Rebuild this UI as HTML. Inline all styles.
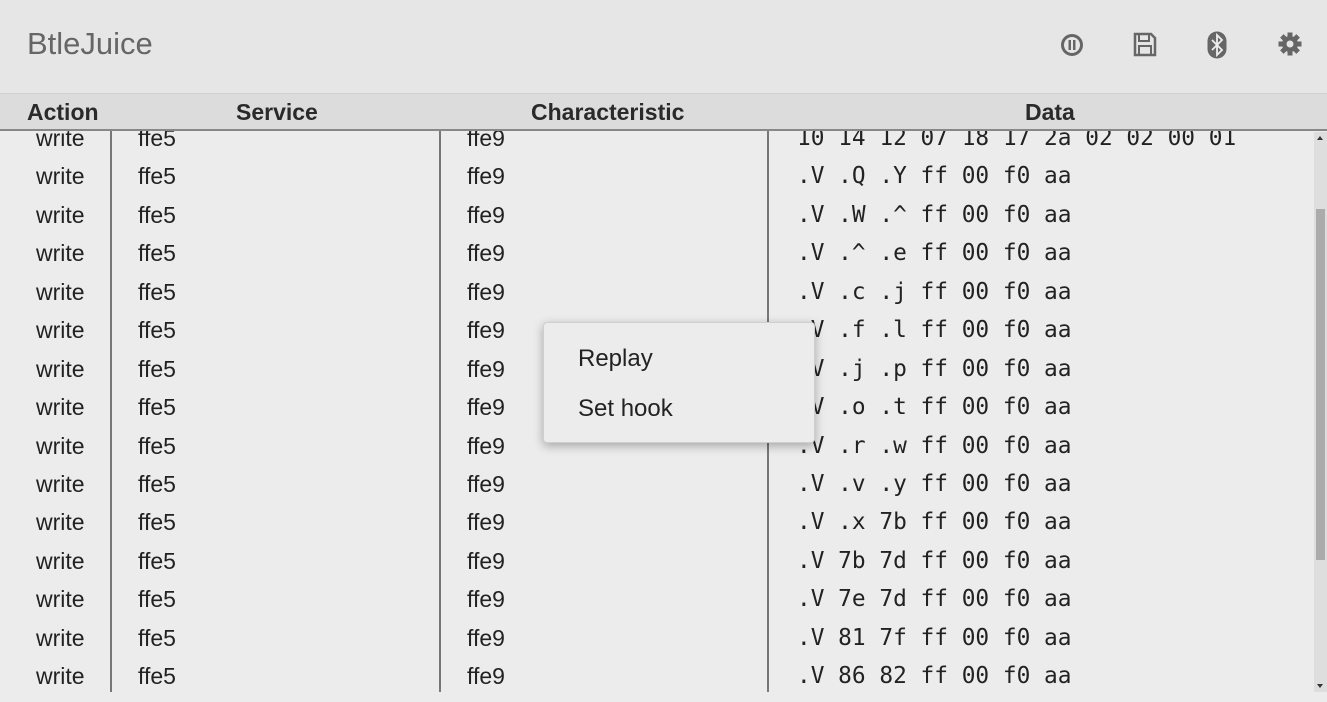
<!DOCTYPE html>
<html><head><meta charset="utf-8"><style>
*{margin:0;padding:0;box-sizing:border-box}
body{width:1327px;height:702px;overflow:hidden;background:#ececec;font-family:"Liberation Sans",sans-serif;position:relative;color:#222}
#top{position:absolute;left:0;top:0;width:1327px;height:93px;background:#e6e6e6}
#title{position:absolute;left:27px;top:26px;font-size:31px;color:#666}
#hdr{position:absolute;left:0;top:93px;width:1327px;height:38px;background:#dcdcdc;border-top:1px solid #d0d0d0;border-bottom:2px solid #888;z-index:2}
.h{position:absolute;top:5px;font-size:23px;font-weight:bold;color:#2a2a2a}
.vl{position:absolute;top:131px;height:561px;width:2px;background:#777}
.row{position:absolute;left:0;height:38px;line-height:38px;font-size:23px;white-space:nowrap;width:1300px}
.row span{position:absolute;top:0}
.a{left:36px}.s{left:138px}.c{left:467px}
.d{left:797px;font-family:"DejaVu Sans Mono","Liberation Mono",monospace;font-size:22.8px}
#bot{position:absolute;left:0;top:692px;width:1327px;height:10px;background:#ececec;z-index:1}
#sb{position:absolute;left:1314px;top:132px;width:13px;height:560px;background:#dedede}
#th{position:absolute;left:1316px;top:209px;width:9px;height:351px;background:#ababab}
#menu{position:absolute;left:543px;top:322px;width:272px;height:121px;background:#ececec;border:1px solid #cfcfcf;border-radius:4px;box-shadow:0 3px 10px rgba(0,0,0,.3);z-index:3}
#menu div{position:absolute;left:34px;font-size:24px;color:#222}
.ic{position:absolute}
</style></head><body>
<div id="top"><div id="title">BtleJuice</div>
<svg class="ic" style="left:1060px;top:33px" width="24" height="24" viewBox="0 0 24 24"><circle cx="12" cy="12" r="9.5" fill="none" stroke="#666" stroke-width="3"/><rect x="8.5" y="7" width="2.5" height="10" fill="#666"/><rect x="13" y="7" width="2.5" height="10" fill="#666"/></svg>
<svg class="ic" style="left:1133px;top:32px" width="24" height="25" viewBox="0 0 24 25"><path d="M2 2h16l4 4v17H2z" fill="none" stroke="#666" stroke-width="2.5"/><rect x="6" y="2" width="10" height="7" fill="none" stroke="#666" stroke-width="2"/><rect x="6" y="14" width="12" height="9" fill="none" stroke="#666" stroke-width="2"/></svg>
<svg class="ic" style="left:1207px;top:31px" width="20" height="28" viewBox="0 0 20 28"><rect x="0.5" y="0.5" width="19" height="27" rx="9.5" fill="#666"/><path d="M5 9l10 10-5 5V4l5 5L5 19" fill="none" stroke="#eee" stroke-width="1.8"/></svg>
<svg class="ic" style="left:1278px;top:32px" width="24" height="24" viewBox="0 0 24 24"><g fill="#666"><circle cx="12" cy="12" r="8"/><rect x="9.5" y="0.5" width="5" height="23"/><rect x="9.5" y="0.5" width="5" height="23" transform="rotate(45 12 12)"/><rect x="9.5" y="0.5" width="5" height="23" transform="rotate(90 12 12)"/><rect x="9.5" y="0.5" width="5" height="23" transform="rotate(135 12 12)"/></g><circle cx="12" cy="12" r="3.5" fill="#e6e6e6"/></svg>
</div>
<div id="hdr">
<div class="h" style="left:27px">Action</div>
<div class="h" style="left:236px">Service</div>
<div class="h" style="left:531px">Characteristic</div>
<div class="h" style="left:1025px">Data</div>
</div>
<div class="row" style="top:119px"><span class="a">write</span><span class="s">ffe5</span><span class="c">ffe9</span><span class="d">10 14 12 07 18 17 2a 02 02 00 01</span></div>
<div class="row" style="top:157px"><span class="a">write</span><span class="s">ffe5</span><span class="c">ffe9</span><span class="d">.V .Q .Y ff 00 f0 aa</span></div>
<div class="row" style="top:196px"><span class="a">write</span><span class="s">ffe5</span><span class="c">ffe9</span><span class="d">.V .W .^ ff 00 f0 aa</span></div>
<div class="row" style="top:234px"><span class="a">write</span><span class="s">ffe5</span><span class="c">ffe9</span><span class="d">.V .^ .e ff 00 f0 aa</span></div>
<div class="row" style="top:273px"><span class="a">write</span><span class="s">ffe5</span><span class="c">ffe9</span><span class="d">.V .c .j ff 00 f0 aa</span></div>
<div class="row" style="top:311px"><span class="a">write</span><span class="s">ffe5</span><span class="c">ffe9</span><span class="d">.V .f .l ff 00 f0 aa</span></div>
<div class="row" style="top:350px"><span class="a">write</span><span class="s">ffe5</span><span class="c">ffe9</span><span class="d">.V .j .p ff 00 f0 aa</span></div>
<div class="row" style="top:388px"><span class="a">write</span><span class="s">ffe5</span><span class="c">ffe9</span><span class="d">.V .o .t ff 00 f0 aa</span></div>
<div class="row" style="top:427px"><span class="a">write</span><span class="s">ffe5</span><span class="c">ffe9</span><span class="d">.V .r .w ff 00 f0 aa</span></div>
<div class="row" style="top:465px"><span class="a">write</span><span class="s">ffe5</span><span class="c">ffe9</span><span class="d">.V .v .y ff 00 f0 aa</span></div>
<div class="row" style="top:503px"><span class="a">write</span><span class="s">ffe5</span><span class="c">ffe9</span><span class="d">.V .x 7b ff 00 f0 aa</span></div>
<div class="row" style="top:542px"><span class="a">write</span><span class="s">ffe5</span><span class="c">ffe9</span><span class="d">.V 7b 7d ff 00 f0 aa</span></div>
<div class="row" style="top:580px"><span class="a">write</span><span class="s">ffe5</span><span class="c">ffe9</span><span class="d">.V 7e 7d ff 00 f0 aa</span></div>
<div class="row" style="top:619px"><span class="a">write</span><span class="s">ffe5</span><span class="c">ffe9</span><span class="d">.V 81 7f ff 00 f0 aa</span></div>
<div class="row" style="top:657px"><span class="a">write</span><span class="s">ffe5</span><span class="c">ffe9</span><span class="d">.V 86 82 ff 00 f0 aa</span></div>
<div class="vl" style="left:110px"></div>
<div class="vl" style="left:439px"></div>
<div class="vl" style="left:767px"></div>
<div id="bot"></div>
<div id="sb"></div><div id="th"></div>
<div style="position:absolute;left:1317px;top:136px;width:0;height:0;border-left:3px solid transparent;border-right:3px solid transparent;border-bottom:4px solid #333"></div>
<div style="position:absolute;left:1317px;top:684px;width:0;height:0;border-left:3px solid transparent;border-right:3px solid transparent;border-top:4px solid #333"></div>
<div id="menu"><div style="top:22px">Replay</div><div style="top:72px">Set hook</div></div>
</body></html>
